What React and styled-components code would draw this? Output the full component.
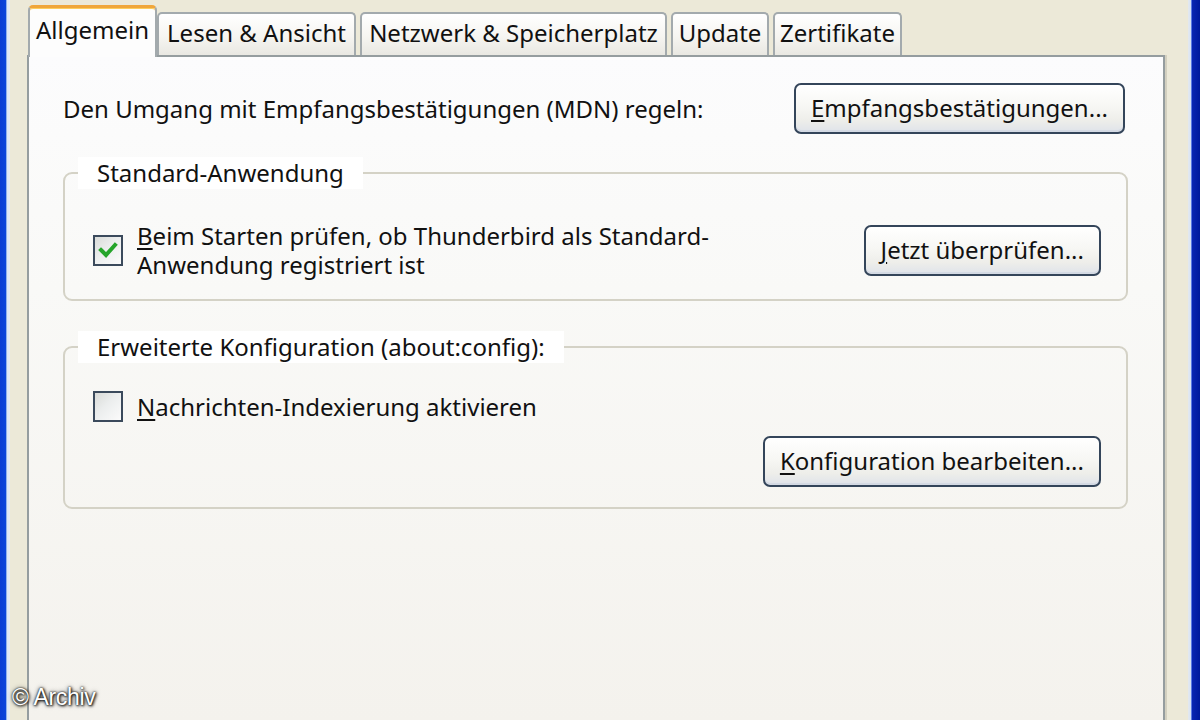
import React from "react";
import styled, { createGlobalStyle } from "styled-components";

const GlobalStyle = createGlobalStyle`
  html, body { margin: 0; padding: 0; }
  body {
    width: 1200px;
    height: 720px;
    overflow: hidden;
    background: #ece9d8;
    font-family: "Noto Sans", "Liberation Sans", Arial, sans-serif;
    color: #111;
  }
  #root { width: 1200px; height: 720px; }
`;

const Screen = styled.div`
  position: relative;
  display: flex;
  width: 1200px;
  height: 720px;
  overflow: hidden;
  background: #ece9d8;
`;

const FrameEdge = styled.div`
  flex: 0 0 ${(p) => (p.$side === "left" ? 10 : 12)}px;
  background: ${(p) =>
    p.$side === "left"
      ? "linear-gradient(to right, #0a3dd4 0, #0b45dc 6px, #8fb0ee 6px, #8fb0ee 7px, #dce7f6 7px, #e6ecf2 10px)"
      : "linear-gradient(to right, #e4e9ee 0, #d6e2f4 3px, #5a7ae2 3px, #5a7ae2 4px, #0a26b2 4px, #001a9c 12px)"};
`;

const Dialog = styled.div`
  flex: 1;
  min-width: 0;
  display: flex;
  flex-direction: column;
  padding: 0 23px 0 17px;
`;

const TabStrip = styled.div`
  display: flex;
  align-items: flex-end;
  height: 55px;
  padding-left: 1px;
  flex: 0 0 auto;
`;

const Tab = styled.div`
  position: relative;
  z-index: ${(p) => (p.$active ? 2 : 1)};
  box-sizing: border-box;
  width: ${(p) => p.$width}px;
  height: ${(p) => (p.$active ? 52 : 43)}px;
  margin-bottom: ${(p) => (p.$active ? -2 : 0)}px;
  margin-right: ${(p) => (p.$active ? 0 : 4)}px;
  display: flex;
  align-items: center;
  justify-content: center;
  padding-bottom: ${(p) => (p.$active ? 6 : 3)}px;
  font-size: 24px;
  line-height: 30px;
  white-space: nowrap;
  color: #111;
  border: 2px solid #a3aaad;
  border-bottom: none;
  border-radius: 5px 5px 0 0;
  border-top: ${(p) => (p.$active ? "3px solid #f0a63a" : "2px solid #a3aaad")};
  box-shadow: ${(p) => (p.$active ? "inset 0 1px 0 #fccd5c" : "none")};
  background: ${(p) =>
    p.$active
      ? "#fdfdfd"
      : "linear-gradient(to bottom, #ffffff 0%, #f6f5f1 55%, #e9e8e2 100%)"};
`;

const Panel = styled.div`
  flex: 1;
  box-sizing: border-box;
  border: 2px solid #959d9f;
  border-bottom: none;
  box-shadow: 2px 0 0 #d3d0c0;
  padding: 26px 35px 0 34px;
  background: linear-gradient(to bottom, #fcfcfd 0%, #f9f9f7 35%, #f4f2ed 100%);
`;

const TopRow = styled.div`
  display: flex;
  align-items: center;
  justify-content: space-between;
  padding-right: 3px;
`;

const Text = styled.span`
  font-size: 24px;
  line-height: 27px;
  color: #111;
  white-space: nowrap;
`;

const Key = styled.span`
  text-decoration: underline;
  text-underline-offset: 3px;
  text-decoration-thickness: 2px;
`;

const Button = styled.button`
  box-sizing: border-box;
  height: 51px;
  padding: 0 15px 2px;
  border: 2px solid #34455a;
  border-radius: 7px;
  font-family: inherit;
  font-size: 24px;
  color: #111;
  white-space: nowrap;
  background: linear-gradient(to bottom, #ffffff 0%, #f7f7f4 45%, #eeeeea 75%, #dfe3ea 100%);
  box-shadow: inset 0 -2px 0 #d4dae4;
  cursor: default;
`;

const Group = styled.fieldset`
  margin: ${(p) => p.$gap}px 0 0 0;
  padding: 0;
  border: 2px solid #d4d2c6;
  border-radius: 9px;
  min-width: 0;
`;

const Legend = styled.legend`
  margin-left: 13px;
  padding: 0 19px;
  font-size: 24px;
  line-height: 32px;
  background: #ffffff;
  color: #111;
  white-space: nowrap;
`;

const GroupBody = styled.div`
  display: flex;
  flex-direction: column;
  padding: ${(p) => p.$pad};
`;

const Row = styled.div`
  display: flex;
  align-items: center;
  justify-content: space-between;
`;

const CheckRow = styled.label`
  display: flex;
  align-items: center;
  gap: 14px;
`;

const Box = styled.span`
  box-sizing: border-box;
  flex: 0 0 30px;
  width: 30px;
  height: 31px;
  border: 2px solid #3b4a5c;
  display: flex;
  align-items: center;
  justify-content: center;
  background: linear-gradient(135deg, #d9dbd8 0%, #eceeee 45%, #fbfbfb 100%);
`;

const Label = styled.span`
  font-size: 24px;
  line-height: 29px;
  color: #111;
`;

const ButtonRow = styled.div`
  display: flex;
  justify-content: flex-end;
  margin-top: 14px;
`;

const Watermark = styled.div`
  position: absolute;
  left: 12px;
  bottom: 9px;
  font-family: "Liberation Sans", Arial, sans-serif;
  font-size: 23px;
  color: #ffffff;
  text-shadow: 0 0 2px #000, 1px 1px 3px #000, 0 0 5px rgba(0,0,0,0.6);
  letter-spacing: -0.3px;
`;

const Check = () => (
  <svg width="20" height="18" viewBox="0 0 20 18">
    <path d="M3 9 L8 14 L17 4" fill="none" stroke="#25a52b" strokeWidth="4" strokeLinecap="square" />
  </svg>
);

const Checkbox = ({ checked }) => <Box>{checked && <Check />}</Box>;

const tabs = [
  { label: "Allgemein", width: 129, active: true },
  { label: "Lesen & Ansicht", width: 199 },
  { label: "Netzwerk & Speicherplatz", width: 307 },
  { label: "Update", width: 98 },
  { label: "Zertifikate", width: 129 },
];

export default function App() {
  return (
    <>
      <GlobalStyle />
      <Screen>
        <FrameEdge $side="left" />
        <Dialog>
          <TabStrip>
            {tabs.map((t) => (
              <Tab key={t.label} $active={t.active} $width={t.width}>
                {t.label}
              </Tab>
            ))}
          </TabStrip>
          <Panel>
            <TopRow>
              <Text>Den Umgang mit Empfangsbestätigungen (MDN) regeln:</Text>
              <Button>
                <Key>E</Key>mpfangsbestätigungen...
              </Button>
            </TopRow>

            <Group $gap={23}>
              <Legend>Standard-Anwendung</Legend>
              <GroupBody $pad="32px 25px 20px 28px">
                <Row>
                  <CheckRow>
                    <Checkbox checked />
                    <Label>
                      <Key>B</Key>eim Starten prüfen, ob Thunderbird als Standard-
                      <br />
                      Anwendung registriert ist
                    </Label>
                  </CheckRow>
                  <Button>
                    <Key>J</Key>etzt überprüfen...
                  </Button>
                </Row>
              </GroupBody>
            </Group>

            <Group $gap={30}>
              <Legend>Erweiterte Konfiguration (about:config):</Legend>
              <GroupBody $pad="28px 25px 20px 28px">
                <CheckRow>
                  <Checkbox />
                  <Label>
                    <Key>N</Key>achrichten-Indexierung aktivieren
                  </Label>
                </CheckRow>
                <ButtonRow>
                  <Button>
                    <Key>K</Key>onfiguration bearbeiten...
                  </Button>
                </ButtonRow>
              </GroupBody>
            </Group>
          </Panel>
        </Dialog>
        <FrameEdge $side="right" />
        <Watermark>© Archiv</Watermark>
      </Screen>
    </>
  );
}
